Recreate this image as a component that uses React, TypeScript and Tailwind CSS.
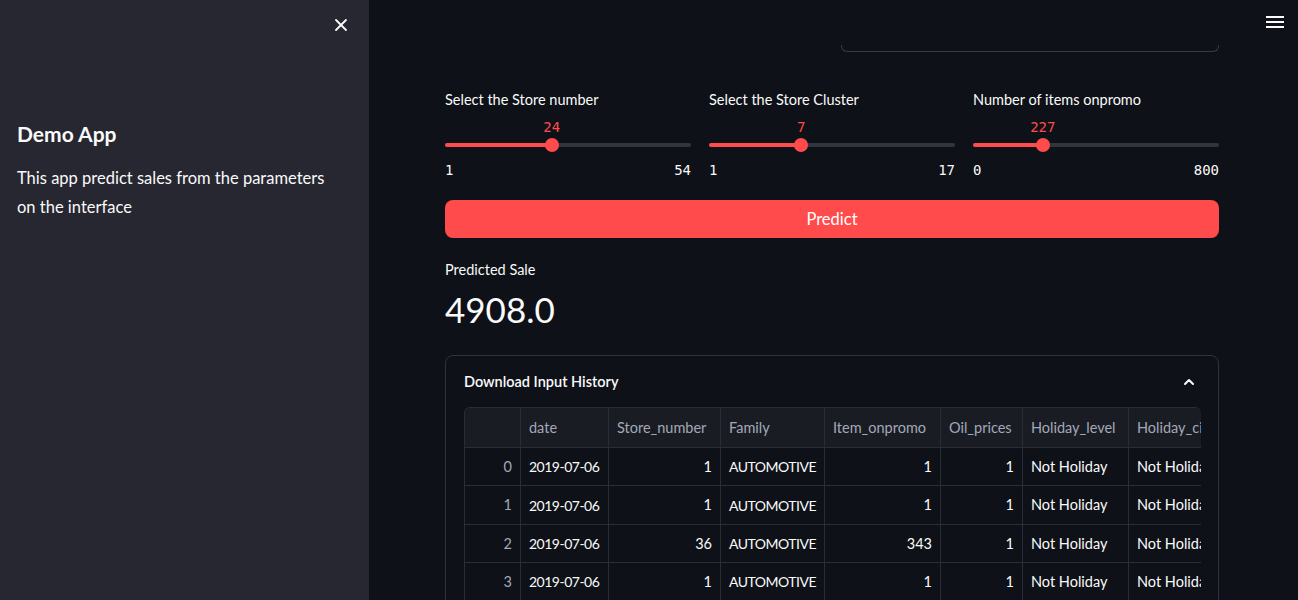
import { X, ChevronUp } from 'lucide-react'

type Slider = { label: string; value: number; min: number; max: number }

const SLIDERS: Slider[] = [
  { label: 'Select the Store number', value: 24, min: 1, max: 54 },
  { label: 'Select the Store Cluster', value: 7, min: 1, max: 17 },
  { label: 'Number of items onpromo', value: 227, min: 0, max: 800 },
]

const COLS = [
  { name: 'date', w: 'w-[88px]', num: false, tight: true },
  { name: 'Store_number', w: 'w-[112px]', num: true, tight: false },
  { name: 'Family', w: 'w-[104px]', num: false, tight: true },
  { name: 'Item_onpromo', w: 'w-[116px]', num: true, tight: false },
  { name: 'Oil_prices', w: 'w-[82px]', num: true, tight: false },
  { name: 'Holiday_level', w: 'w-[106px]', num: false, tight: false },
  { name: 'Holiday_city', w: 'w-[110px]', num: false, tight: false },
]

const ROWS = [
  ['2019-07-06', '1', 'AUTOMOTIVE', '1', '1', 'Not Holiday', 'Not Holiday'],
  ['2019-07-06', '1', 'AUTOMOTIVE', '1', '1', 'Not Holiday', 'Not Holiday'],
  ['2019-07-06', '36', 'AUTOMOTIVE', '343', '1', 'Not Holiday', 'Not Holiday'],
  ['2019-07-06', '1', 'AUTOMOTIVE', '1', '1', 'Not Holiday', 'Not Holiday'],
]

function RangeSlider({ s }: { s: Slider }) {
  const pct = ((s.value - s.min) / (s.max - s.min)) * 100
  return (
    <div className="flex flex-col">
      <div className="h-[20px] leading-[20px] text-[14.5px] text-[#fafafa]">{s.label}</div>
      {/* value above thumb */}
      <div className="relative h-[24px]">
        <span
          className="absolute -bottom-[3px] -translate-x-1/2 leading-[20px] text-sm text-[#ff4b4b] font-['DejaVu_Sans_Mono',monospace]"
          style={{ left: `${pct}%` }}
        >
          {s.value}
        </span>
      </div>
      <div className="relative h-[22px] flex items-center">
        <div className="w-full h-[4px] rounded-full bg-[#31333f]">
          <div className="h-full rounded-full bg-[#ff4b4b]" style={{ width: `${pct}%` }} />
        </div>
        <div
          className="absolute top-1/2 w-[14px] h-[14px] -translate-x-1/2 -translate-y-1/2 rounded-full bg-[#ff4b4b]"
          style={{ left: `${pct}%` }}
        />
      </div>
      <div className="mt-[4px] h-[20px] flex justify-between items-center text-sm text-[#fafafa] font-['DejaVu_Sans_Mono',monospace]">
        <span>{s.min}</span>
        <span>{s.max}</span>
      </div>
    </div>
  )
}

export default function App() {
  return (
    <div className="flex h-[600px] overflow-hidden font-['Lato','Noto_Sans',sans-serif] text-[#fafafa]">
      {/* ── SIDEBAR ─────────────────────────────────────── */}
      <aside className="w-[369px] shrink-0 bg-[#262730] px-[17px]">
        <div className="flex justify-end pt-[15px] pr-[1px]">
          <X size={20} strokeWidth={2.2} className="text-[#fafafa]" />
        </div>
        <h3 className="mt-[84px] text-[21px] font-bold leading-[30px]">Demo App</h3>
        <p className="mt-[15px] w-[320px] text-[16.5px] leading-[29px] text-[#fafafa]">
          This app predict sales from the parameters on the interface
        </p>
      </aside>

      {/* ── MAIN ────────────────────────────────────────── */}
      <main className="relative flex-1 bg-[#0e1117]">
        <button className="absolute top-[16px] right-[14px]">
          <svg width="18" height="14" viewBox="0 0 18 14">
            <rect x="0" y="0" width="18" height="2" fill="#fafafa" />
            <rect x="0" y="5" width="18" height="2" fill="#fafafa" />
            <rect x="0" y="10" width="18" height="2" fill="#fafafa" />
          </svg>
        </button>

        <div className="w-[774px] ml-[76px]">
          {/* partially scrolled input */}
          <div className="grid grid-cols-2 gap-[17px]">
            <div />
            <div className="mt-[45px] h-[7px] border-x border-b border-[#3a3c45] rounded-b-[6px]" />
          </div>

          {/* sliders */}
          <div className="mt-[38px] grid grid-cols-3 gap-[18px]">
            {SLIDERS.map((s) => (
              <RangeSlider key={s.label} s={s} />
            ))}
          </div>

          <button className="mt-[20px] w-full h-[38px] rounded-[8px] bg-[#ff4b4b] text-[16.5px] text-white">
            Predict
          </button>

          <div className="mt-[22px] h-[20px] leading-[20px] text-[14.5px]">Predicted Sale</div>
          <div className="mt-[7px] text-[35px] leading-[44px]">4908.0</div>

          {/* ── EXPANDER ─────────────────────────────────── */}
          <div className="mt-[24px] border border-[#31333c] rounded-[8px] h-[300px] px-[18px]">
            <div className="h-[51px] flex items-center justify-between">
              <span className="text-[14.5px] font-semibold">Download Input History</span>
              <ChevronUp size={16} strokeWidth={3} className="mr-[3px] text-[#fafafa]" />
            </div>

            <div className="w-[737px] overflow-hidden border-l border-t border-[#2b2d36] rounded-t-[6px] text-[14.5px]">
              <div className="flex w-max h-[40px] bg-[#1a1c24] text-[#a3a8b8] border-b border-[#2b2d36]">
                <div className="w-[56px] border-r border-[#2b2d36]" />
                {COLS.map((c) => (
                  <div
                    key={c.name}
                    className={`${c.w} px-[8px] flex items-center border-r border-[#2b2d36] whitespace-nowrap`}
                  >
                    {c.name}
                  </div>
                ))}
              </div>
              {ROWS.map((r, i) => (
                <div key={i} className="flex w-max h-[38.4px] border-b border-[#2b2d36]">
                  <div className="w-[56px] px-[8px] flex items-center justify-end border-r border-[#2b2d36] text-[#a3a8b8]">
                    {i}
                  </div>
                  {COLS.map((c, j) => (
                    <div
                      key={c.name}
                      className={clsxCell(c.w, c.num, c.tight)}
                    >
                      {r[j]}
                    </div>
                  ))}
                </div>
              ))}
            </div>
          </div>
        </div>
      </main>
    </div>
  )
}

function clsxCell(w: string, num: boolean, tight: boolean) {
  return [
    w,
    'px-[8px] flex items-center border-r border-[#2b2d36] whitespace-nowrap',
    num ? 'justify-end' : '',
    tight ? 'text-[14px] tracking-[-0.5px]' : '',
  ].join(' ')
}
